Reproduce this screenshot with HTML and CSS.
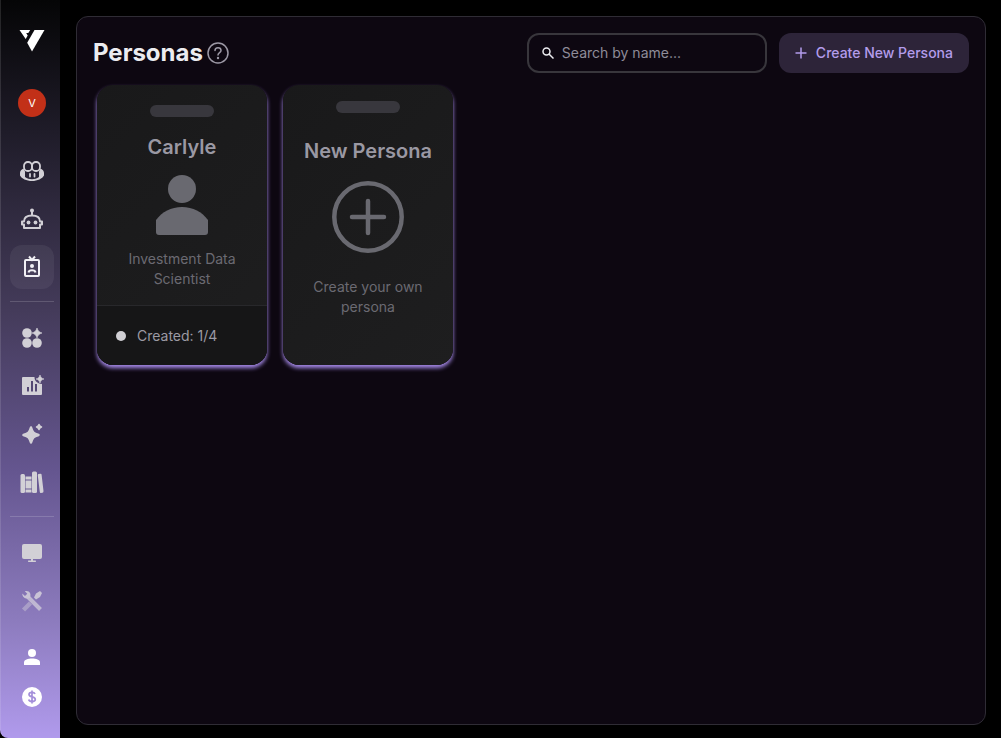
FILE: index.html
```html
<!DOCTYPE html>
<html lang="en">
<head>
  <meta charset="UTF-8" />
  <meta name="viewport" content="width=device-width, initial-scale=1.0" />
  <title>Personas</title>
  <link rel="stylesheet" href="styles.css">
</head>
<body>
  <nav class="sidebar" aria-label="Main">
    <a href="#" class="logo" aria-label="Home">
      <svg width="26" height="24" viewBox="0 0 26 24" fill="#fff">
        <path d="M0.5 2H11.200L9.300 5H7.200L8.700 7.400L6.700 11Z" />
        <path d="M15.500 2H25.500L13 23.500L8.200 14.800Z" />
      </svg>
    </a>
    <button class="avatar">V</button>

    <div class="nav-group">
      <a href="#" class="nav-item" aria-label="Copilot">
        <svg width="24" height="22" viewBox="0 0 24 22" fill="none" stroke="currentColor" stroke-width="1.800">
          <rect x="4" y="2" width="8" height="9" rx="3.800" />
          <rect x="12" y="2" width="8" height="9" rx="3.800" />
          <path fill="currentColor" fill-rule="evenodd" stroke="none" d="M3.500 8.500C1 10 0 11 0 13V15.500C1.500 18.500 6.500 21 12 21S22.500 18.500 24 15.500V13C24 11 23 10 20.500 8.500L19 11.500V17C17 18.500 14.500 19.200 12 19.200S7 18.500 5 17V11.500Z" />
          <path d="M10 14V16.500M14.500 14V16.500" stroke-linecap="round" />
        </svg>
      </a>
      <a href="#" class="nav-item" aria-label="Agents">
        <svg width="24" height="24" viewBox="0 0 24 24" fill="none" stroke="currentColor" stroke-width="2">
          <path d="M12 3V8" />
          <circle cx="12" cy="3.500" r="2" fill="currentColor" stroke="none" />
          <path d="M4 14.500C4 10.500 7 8.500 12 8.500S20 10.500 20 14.500H22V17.500H20V21H4V17.500H2V14.500Z" stroke-linejoin="round" />
          <circle cx="8.500" cy="15.500" r="1.900" fill="currentColor" stroke="none" />
          <circle cx="15.500" cy="15.500" r="1.900" fill="currentColor" stroke="none" />
        </svg>
      </a>
      <a href="#" class="nav-item active" aria-label="Personas" aria-current="page">
        <svg width="24" height="24" viewBox="0 0 24 24" fill="none" stroke="currentColor" stroke-width="2">
          <rect x="5" y="5" width="14" height="16" rx="1" />
          <path d="M9 1.500L12 5L15 1.500" />
          <circle cx="12" cy="11" r="2" fill="currentColor" stroke="none" />
          <path d="M8.500 17.500C9 14.500 15 14.500 15.500 17.500" />
        </svg>
      </a>
    </div>

    <hr class="divider" />

    <div class="nav-group">
      <a href="#" class="nav-item" aria-label="Apps">
        <svg width="24" height="24" viewBox="0 0 24 24" fill="currentColor">
          <circle cx="7" cy="7" r="4.800" />
          <circle cx="7" cy="17" r="4.800" />
          <circle cx="17" cy="17" r="4.800" />
          <path d="M17 2C18 5 19 6 22 7C19 8 18 9 17 12C16 9 15 8 12 7C15 6 16 5 17 2Z" stroke="currentColor" stroke-width=".6" />
        </svg>
      </a>
      <a href="#" class="nav-item" aria-label="Reports">
        <svg width="24" height="24" viewBox="0 0 24 24" fill="currentColor">
          <path fill-rule="evenodd" d="M3 3H14.500C14.500 7 17 9.500 22 10V20Q22 21 21 21H3Q2 21 2 20V4Q2 3 3 3ZM7 13V17.500H9V13ZM11 7V17.500H13V7ZM15 10V17.500H17V10Z" />
          <path d="M20 1C21 3.700 21.500 4.200 24 5C21.500 5.800 21 6.300 20 9C19 6.300 18.500 5.800 16 5C18.500 4.200 19 3.700 20 1Z" stroke="currentColor" stroke-width=".6" />
        </svg>
      </a>
      <a href="#" class="nav-item" aria-label="Prompts">
        <svg width="24" height="24" viewBox="0 0 24 24" fill="currentColor" stroke="currentColor" stroke-linejoin="round">
          <path stroke-width="2.500" d="M11 5.500C12.500 10.500 13.500 11.500 18.500 13C13.500 14.500 12.500 15.500 11 20.500C9.500 15.500 8.500 14.500 3.500 13C8.500 11.500 9.500 10.500 11 5.500Z" />
          <path stroke-width="1.500" d="M19 2.500C19.600 4.200 19.800 4.400 21.500 5C19.800 5.600 19.600 5.800 19 7.500C18.400 5.800 18.200 5.600 16.500 5C18.200 4.400 18.400 4.200 19 2.500Z" />
        </svg>
      </a>
      <a href="#" class="nav-item" aria-label="Library">
        <svg width="24" height="24" viewBox="0 0 24 24" fill="currentColor">
          <rect x="0.500" y="4" width="4.500" height="19" rx="1.500" />
          <path d="M5.500 6.500H11.500V9.500H5.500ZM5.500 10.500H11.500V18.500H5.500ZM5.500 19.500H11.500V22.500H5.500Z" />
          <rect x="12" y="1.500" width="5" height="21.500" rx="1.500" />
          <path d="M18.500 4L20.500 3.700Q21.500 3.600 21.600 4.700L23.500 21Q23.600 22.500 22.500 22.700L20.900 22.900Q20 23 19.800 22L17.800 5.500Q17.600 4.200 18.500 4Z" />
        </svg>
      </a>
    </div>

    <hr class="divider" />

    <div class="nav-group">
      <a href="#" class="nav-item" aria-label="Desktop">
        <svg width="24" height="24" viewBox="0 0 24 24" fill="currentColor">
          <rect x="2" y="3" width="20" height="15" rx="2" />
          <path d="M11 18H13V19.500H15.500Q16 19.500 16 20.200T15.500 21H8.500Q8 21 8 20.200T8.500 19.500H11Z" />
        </svg>
      </a>
      <a href="#" class="nav-item muted" aria-label="Tools">
        <svg width="24" height="24" viewBox="0 0 24 24" fill="none" stroke="currentColor">
          <path d="M8 8L20.500 20.500" stroke-width="4" opacity=".85" />
          <path d="M2.200 4.500L5 7L7.300 4.700L4.800 2.200C9.500 1 11.500 5 10 8.500C7.500 11 2.500 9.500 2.200 4.500Z" fill="currentColor" stroke="none" />
          <path d="M10.500 14L3.500 21" stroke-width="4.500" opacity=".5" />
          <path d="M14 8.500L16 4.500L20 2L22 4L20 8L16 10.500Z" fill="currentColor" stroke="none" />
        </svg>
      </a>
    </div>

    <div class="nav-bottom">
      <a href="#" class="nav-item small" aria-label="Account">
        <svg width="24" height="24" viewBox="0 0 24 24" fill="currentColor">
          <circle cx="12" cy="8" r="4" />
          <path d="M4 20V17.500C4 14.500 8 13.500 12 13.500S20 14.500 20 17.500V20Z" />
        </svg>
      </a>
      <a href="#" class="nav-item small" aria-label="Billing">
        <svg width="24" height="24" viewBox="0 0 24 24">
          <circle cx="12" cy="12" r="10" fill="currentColor" />
          <path d="M12 5.500V18.500M15 9C14.500 7.700 13.300 7.400 12 7.400C10.200 7.400 9 8.200 9 9.500C9 12.700 15.300 11 15.300 14.300C15.300 15.700 13.900 16.600 12 16.600C10.200 16.600 9.100 15.900 8.700 14.600" fill="none" stroke="#a48fda" stroke-width="1.700" />
        </svg>
      </a>
    </div>
  </nav>

  <main class="panel">
    <header class="panel-header">
      <h1>Personas</h1>
      <button class="help" aria-label="Help">
        <svg width="22" height="22" viewBox="0 0 22 22" fill="none" stroke="currentColor" stroke-width="1.500">
          <circle cx="11" cy="11" r="10" />
          <path d="M8 8.500C8 6.700 9.300 5.700 11 5.700S14 6.700 14 8.400C14 10.500 11 10.700 11 13" stroke-linecap="round" />
          <circle cx="11" cy="16" r="1.200" fill="currentColor" stroke="none" />
        </svg>
      </button>

      <div class="actions">
        <label class="search">
          <svg width="12" height="12" viewBox="0 0 12 12" fill="none" stroke="currentColor" stroke-width="1.500">
            <circle cx="4.500" cy="4.500" r="3.500" />
            <path d="M7 7L11.500 11.500" />
          </svg>
          <input type="text" placeholder="Search by name..." aria-label="Search by name" />
        </label>
        <button class="create">
          <svg width="12" height="12" viewBox="0 0 12 12" stroke="currentColor" stroke-width="1.500">
            <path d="M6 0.500V11.500M0.500 6H11.500" />
          </svg>
          Create New Persona
        </button>
      </div>
    </header>

    <section class="cards">
      <article class="card">
        <div class="card-body">
          <div class="slot"></div>
          <h2>Carlyle</h2>
          <svg class="person" width="52" height="60" viewBox="0 0 52 60" fill="currentColor">
            <circle cx="26" cy="14" r="14" />
            <path d="M0 45C6 37 15 32 26 32S46 37 52 45V57Q52 60 49 60H3Q0 60 0 57Z" />
          </svg>
          <p>Investment Data Scientist</p>
        </div>
        <footer class="card-footer">
          <span class="dot"></span>
          <span>Created: 1/4</span>
        </footer>
      </article>

      <article class="card new-card">
        <div class="card-body">
          <div class="slot"></div>
          <h2>New Persona</h2>
          <svg class="plus" width="72" height="72" viewBox="0 0 72 72" fill="none" stroke="currentColor" stroke-width="4.500">
            <circle cx="36" cy="36" r="33.700" />
            <path d="M36 20V52M20 36H52" stroke-linecap="round" />
          </svg>
          <p>Create your own persona</p>
        </div>
      </article>
    </section>
  </main>
</body>
</html>
```
FILE: styles.css
```css
* {
  box-sizing: border-box;
}

body {
  margin: 0;
  display: flex;
  min-height: 100vh;
  background: #000;
  color: #ececf0;
  font-family: Inter, sans-serif;
  font-size: 14px;
  line-height: 20px;
}

h1,
h2,
p {
  margin: 0;
}

button {
  border: none;
  font: inherit;
  cursor: pointer;
}

svg {
  display: block;
  flex: none;
}

/* sidebar */
.sidebar {
  flex: none;
  width: 60px;
  padding: 28px 6px 21px 9px;
  display: flex;
  flex-direction: column;
  align-items: center;
  border-left: 1px solid rgba(255, 255, 255, 0.12);
  border-bottom-left-radius: 8px;
  background: linear-gradient(180deg, #050506 0%, #1f1c29 18%, #443b5a 42%, #655690 64%, #8c7bbd 84%, #b09aec 100%);
}

.logo {
  margin-bottom: 37px;
}

.avatar {
  width: 28px;
  height: 28px;
  margin-bottom: 32px;
  padding: 0;
  border-radius: 50%;
  background: #c23018;
  color: #fff;
  font-size: 11px;
}

.nav-group {
  display: flex;
  flex-direction: column;
  gap: 4px;
}

.nav-item {
  width: 44px;
  height: 44px;
  display: flex;
  align-items: center;
  justify-content: center;
  border-radius: 12px;
  color: #d2d0d6;
}

.nav-item.active {
  background: rgba(255, 255, 255, 0.06);
  color: #f2f1f5;
}

.nav-item.muted {
  color: #c9c3d6;
}

.nav-item.small {
  height: 40px;
  color: #fff;
}

.divider {
  width: 100%;
  margin: 12px 0 14px;
  border: none;
  border-top: 1px solid rgba(255, 255, 255, 0.16);
}

.nav-bottom {
  margin-top: auto;
}

/* main panel */
.panel {
  flex: 1;
  margin: 16px 15px 13px 16px;
  padding: 16px;
  border: 1px solid #2f2c35;
  border-radius: 12px;
  background: #0d0711;
}

.panel-header {
  display: flex;
  align-items: center;
  gap: 4px;
}

h1 {
  font-size: 24px;
  line-height: 32px;
  font-weight: 700;
}

.help {
  padding: 0;
  background: none;
  color: #9c98a5;
}

.actions {
  display: flex;
  gap: 12px;
  margin-left: auto;
}

.search {
  width: 240px;
  height: 40px;
  padding: 0 13px;
  display: flex;
  align-items: center;
  gap: 8px;
  border: 2px solid #38363c;
  border-radius: 12px;
}

.search input {
  width: 100%;
  min-width: 0;
  padding: 0;
  border: none;
  outline: none;
  background: none;
  color: inherit;
  font: inherit;
}

.search input::placeholder {
  color: #8f8c99;
  opacity: 1;
}

.create {
  height: 40px;
  padding: 0 16px;
  display: flex;
  align-items: center;
  gap: 9px;
  border-radius: 12px;
  background: #2d2439;
  color: #b39ceb;
  font-weight: 500;
}

/* cards */
.cards {
  display: flex;
  flex-wrap: wrap;
  gap: 16px;
  padding: 12px 4px;
}

.card {
  width: 170px;
  min-height: 280px;
  display: flex;
  flex-direction: column;
  overflow: hidden;
  border-radius: 16px;
  background: linear-gradient(135deg, #19191a, #1e1e1f);
  box-shadow: 0 3px 4px #a78bea;
}

.card-body {
  flex: 1;
  padding: 20px 20px 16px;
  display: flex;
  flex-direction: column;
  align-items: center;
  text-align: center;
}

.slot {
  width: 64px;
  height: 12px;
  border-radius: 6px;
  background: #38373d;
}

h2 {
  margin-top: 16px;
  color: #9a98a3;
  font-size: 20px;
  line-height: 28px;
  font-weight: 600;
  white-space: nowrap;
}

.person {
  margin-top: 14px;
  color: #696970;
}

.card p {
  margin-top: 14px;
  color: #6b6a72;
}

.card-footer {
  height: 60px;
  padding: 0 19px;
  display: flex;
  align-items: center;
  gap: 11px;
  border-top: 1px solid #28282b;
  background: #161617;
  color: #9c9aa4;
}

.dot {
  width: 10px;
  height: 10px;
  border-radius: 50%;
  background: #d0cfd4;
}

.new-card .card-body {
  padding-top: 16px;
}

.new-card h2 {
  margin-top: 24px;
}

.plus {
  margin-top: 16px;
  color: #696970;
}

.new-card p {
  margin-top: 24px;
}
```
